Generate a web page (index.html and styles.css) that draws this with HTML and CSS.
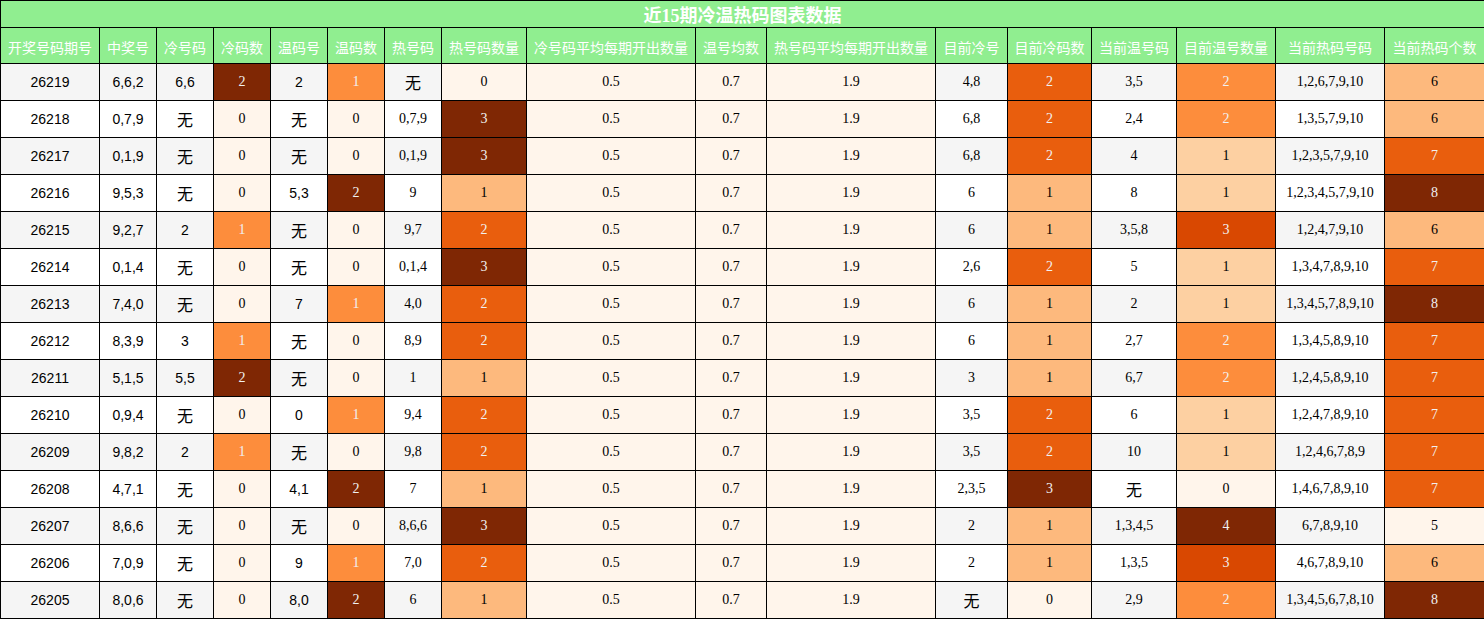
FILE: index.html
```html
<!DOCTYPE html>
<html lang="zh">
<head>
<meta charset="utf-8">
<title>近15期冷温热码图表数据</title>
<link rel="stylesheet" href="styles.css">
</head>
<body>
<table class="chart">
  <colgroup>
    <col class="w99"><col class="w57"><col class="w57"><col class="w57"><col class="w57"><col class="w57"><col class="w57">
    <col class="w85"><col class="w169"><col class="w71"><col class="w169"><col class="w72"><col class="w84"><col class="w85">
    <col class="w99"><col class="w109"><col class="w99b">
  </colgroup>
  <thead>
    <tr class="title"><th colspan="17">近15期冷温热码图表数据</th></tr>
    <tr class="head">
      <th>开奖号码期号</th><th>中奖号</th><th>冷号码</th><th>冷码数</th><th>温码号</th><th>温码数</th><th>热号码</th><th>热号码数量</th><th>冷号码平均每期开出数量</th><th>温号均数</th><th>热号码平均每期开出数量</th><th>目前冷号</th><th>目前冷码数</th><th>当前温号码</th><th>目前温号数量</th><th>当前热码号码</th><th>当前热码个数</th>
    </tr>
  </thead>
  <tbody>
    <tr class="odd"><td class="ss">26219</td><td class="ss">6,6,2</td><td class="ss">6,6</td><td class="g6">2</td><td class="ss">2</td><td class="g3">1</td><td><span class="none">无</span></td><td class="g0">0</td><td class="g0">0.5</td><td class="g0">0.7</td><td class="g0">1.9</td><td>4,8</td><td class="g4">2</td><td>3,5</td><td class="g3">2</td><td>1,2,6,7,9,10</td><td class="g2">6</td></tr>
    <tr><td class="ss">26218</td><td class="ss">0,7,9</td><td><span class="none">无</span></td><td class="g0">0</td><td><span class="none">无</span></td><td class="g0">0</td><td>0,7,9</td><td class="g6">3</td><td class="g0">0.5</td><td class="g0">0.7</td><td class="g0">1.9</td><td>6,8</td><td class="g4">2</td><td>2,4</td><td class="g3">2</td><td>1,3,5,7,9,10</td><td class="g2">6</td></tr>
    <tr class="odd"><td class="ss">26217</td><td class="ss">0,1,9</td><td><span class="none">无</span></td><td class="g0">0</td><td><span class="none">无</span></td><td class="g0">0</td><td>0,1,9</td><td class="g6">3</td><td class="g0">0.5</td><td class="g0">0.7</td><td class="g0">1.9</td><td>6,8</td><td class="g4">2</td><td>4</td><td class="g1">1</td><td>1,2,3,5,7,9,10</td><td class="g4">7</td></tr>
    <tr><td class="ss">26216</td><td class="ss">9,5,3</td><td><span class="none">无</span></td><td class="g0">0</td><td class="ss">5,3</td><td class="g6">2</td><td>9</td><td class="g2">1</td><td class="g0">0.5</td><td class="g0">0.7</td><td class="g0">1.9</td><td>6</td><td class="g2">1</td><td>8</td><td class="g1">1</td><td>1,2,3,4,5,7,9,10</td><td class="g6">8</td></tr>
    <tr class="odd"><td class="ss">26215</td><td class="ss">9,2,7</td><td class="ss">2</td><td class="g3">1</td><td><span class="none">无</span></td><td class="g0">0</td><td>9,7</td><td class="g4">2</td><td class="g0">0.5</td><td class="g0">0.7</td><td class="g0">1.9</td><td>6</td><td class="g2">1</td><td>3,5,8</td><td class="g5">3</td><td>1,2,4,7,9,10</td><td class="g2">6</td></tr>
    <tr><td class="ss">26214</td><td class="ss">0,1,4</td><td><span class="none">无</span></td><td class="g0">0</td><td><span class="none">无</span></td><td class="g0">0</td><td>0,1,4</td><td class="g6">3</td><td class="g0">0.5</td><td class="g0">0.7</td><td class="g0">1.9</td><td>2,6</td><td class="g4">2</td><td>5</td><td class="g1">1</td><td>1,3,4,7,8,9,10</td><td class="g4">7</td></tr>
    <tr class="odd"><td class="ss">26213</td><td class="ss">7,4,0</td><td><span class="none">无</span></td><td class="g0">0</td><td class="ss">7</td><td class="g3">1</td><td>4,0</td><td class="g4">2</td><td class="g0">0.5</td><td class="g0">0.7</td><td class="g0">1.9</td><td>6</td><td class="g2">1</td><td>2</td><td class="g1">1</td><td>1,3,4,5,7,8,9,10</td><td class="g6">8</td></tr>
    <tr><td class="ss">26212</td><td class="ss">8,3,9</td><td class="ss">3</td><td class="g3">1</td><td><span class="none">无</span></td><td class="g0">0</td><td>8,9</td><td class="g4">2</td><td class="g0">0.5</td><td class="g0">0.7</td><td class="g0">1.9</td><td>6</td><td class="g2">1</td><td>2,7</td><td class="g3">2</td><td>1,3,4,5,8,9,10</td><td class="g4">7</td></tr>
    <tr class="odd"><td class="ss">26211</td><td class="ss">5,1,5</td><td class="ss">5,5</td><td class="g6">2</td><td><span class="none">无</span></td><td class="g0">0</td><td>1</td><td class="g2">1</td><td class="g0">0.5</td><td class="g0">0.7</td><td class="g0">1.9</td><td>3</td><td class="g2">1</td><td>6,7</td><td class="g3">2</td><td>1,2,4,5,8,9,10</td><td class="g4">7</td></tr>
    <tr><td class="ss">26210</td><td class="ss">0,9,4</td><td><span class="none">无</span></td><td class="g0">0</td><td class="ss">0</td><td class="g3">1</td><td>9,4</td><td class="g4">2</td><td class="g0">0.5</td><td class="g0">0.7</td><td class="g0">1.9</td><td>3,5</td><td class="g4">2</td><td>6</td><td class="g1">1</td><td>1,2,4,7,8,9,10</td><td class="g4">7</td></tr>
    <tr class="odd"><td class="ss">26209</td><td class="ss">9,8,2</td><td class="ss">2</td><td class="g3">1</td><td><span class="none">无</span></td><td class="g0">0</td><td>9,8</td><td class="g4">2</td><td class="g0">0.5</td><td class="g0">0.7</td><td class="g0">1.9</td><td>3,5</td><td class="g4">2</td><td>10</td><td class="g1">1</td><td>1,2,4,6,7,8,9</td><td class="g4">7</td></tr>
    <tr><td class="ss">26208</td><td class="ss">4,7,1</td><td><span class="none">无</span></td><td class="g0">0</td><td class="ss">4,1</td><td class="g6">2</td><td>7</td><td class="g2">1</td><td class="g0">0.5</td><td class="g0">0.7</td><td class="g0">1.9</td><td>2,3,5</td><td class="g6">3</td><td><span class="none">无</span></td><td class="g0">0</td><td>1,4,6,7,8,9,10</td><td class="g4">7</td></tr>
    <tr class="odd"><td class="ss">26207</td><td class="ss">8,6,6</td><td><span class="none">无</span></td><td class="g0">0</td><td><span class="none">无</span></td><td class="g0">0</td><td>8,6,6</td><td class="g6">3</td><td class="g0">0.5</td><td class="g0">0.7</td><td class="g0">1.9</td><td>2</td><td class="g2">1</td><td>1,3,4,5</td><td class="g6">4</td><td>6,7,8,9,10</td><td class="g0">5</td></tr>
    <tr><td class="ss">26206</td><td class="ss">7,0,9</td><td><span class="none">无</span></td><td class="g0">0</td><td class="ss">9</td><td class="g3">1</td><td>7,0</td><td class="g4">2</td><td class="g0">0.5</td><td class="g0">0.7</td><td class="g0">1.9</td><td>2</td><td class="g2">1</td><td>1,3,5</td><td class="g5">3</td><td>4,6,7,8,9,10</td><td class="g2">6</td></tr>
    <tr class="odd"><td class="ss">26205</td><td class="ss">8,0,6</td><td><span class="none">无</span></td><td class="g0">0</td><td class="ss">8,0</td><td class="g6">2</td><td>6</td><td class="g2">1</td><td class="g0">0.5</td><td class="g0">0.7</td><td class="g0">1.9</td><td><span class="none">无</span></td><td class="g0">0</td><td>2,9</td><td class="g3">2</td><td>1,3,4,5,6,7,8,10</td><td class="g6">8</td></tr>
  </tbody>
</table>
</body>
</html>
```

FILE: styles.css
```css
html, body {
  margin: 0;
  padding: 0;
  background: #ffffff;
}

.chart {
  border-collapse: collapse;
  table-layout: fixed;
  width: 1484px;
  font-family: "Liberation Serif", "Noto Sans CJK SC", serif;
  font-size: 14px;
  color: #000000;
}

.w99 { width: 99px; }
.w57 { width: 57px; }
.w85 { width: 85px; }
.w169 { width: 169px; }
.w71 { width: 71px; }
.w72 { width: 72px; }
.w84 { width: 84px; }
.w109 { width: 109px; }
.w99b { width: 100px; }

.chart th,
.chart td {
  border: 1px solid #000000;
  padding: 0;
  text-align: center;
  vertical-align: middle;
  white-space: nowrap;
}

.title th {
  height: 26px;
  background: #90ee90;
  color: #ffffff;
  font-size: 18px;
  font-weight: bold;
  font-family: "Liberation Serif", "Noto Sans CJK SC", serif;
}

.head th {
  height: 33px;
  background: #90ee90;
  color: #ffffff;
  font-weight: normal;
  font-size: 14px;
  font-family: "Noto Sans CJK SC", sans-serif;
  padding-top: 2px;
}

.chart td {
  height: 36px;
  background: #ffffff;
}

.chart tr.odd td {
  background: #f5f5f5;
}

.chart td.ss {
  font-family: "Liberation Sans", "Noto Sans CJK SC", sans-serif;
}

.none {
  font-family: "Noto Sans CJK SC", sans-serif;
  font-size: 16px;
  vertical-align: -3px;
}

.chart tr td.g0 { background: #fff5eb; color: #000000; }
.chart tr td.g1 { background: #fdd0a2; color: #000000; }
.chart tr td.g2 { background: #fdb97d; color: #000000; }
.chart tr td.g3 { background: #fd8d3c; color: #f1f1f1; }
.chart tr td.g4 { background: #e95e0d; color: #f1f1f1; }
.chart tr td.g5 { background: #d94801; color: #f1f1f1; }
.chart tr td.g6 { background: #7f2704; color: #f1f1f1; }
```
